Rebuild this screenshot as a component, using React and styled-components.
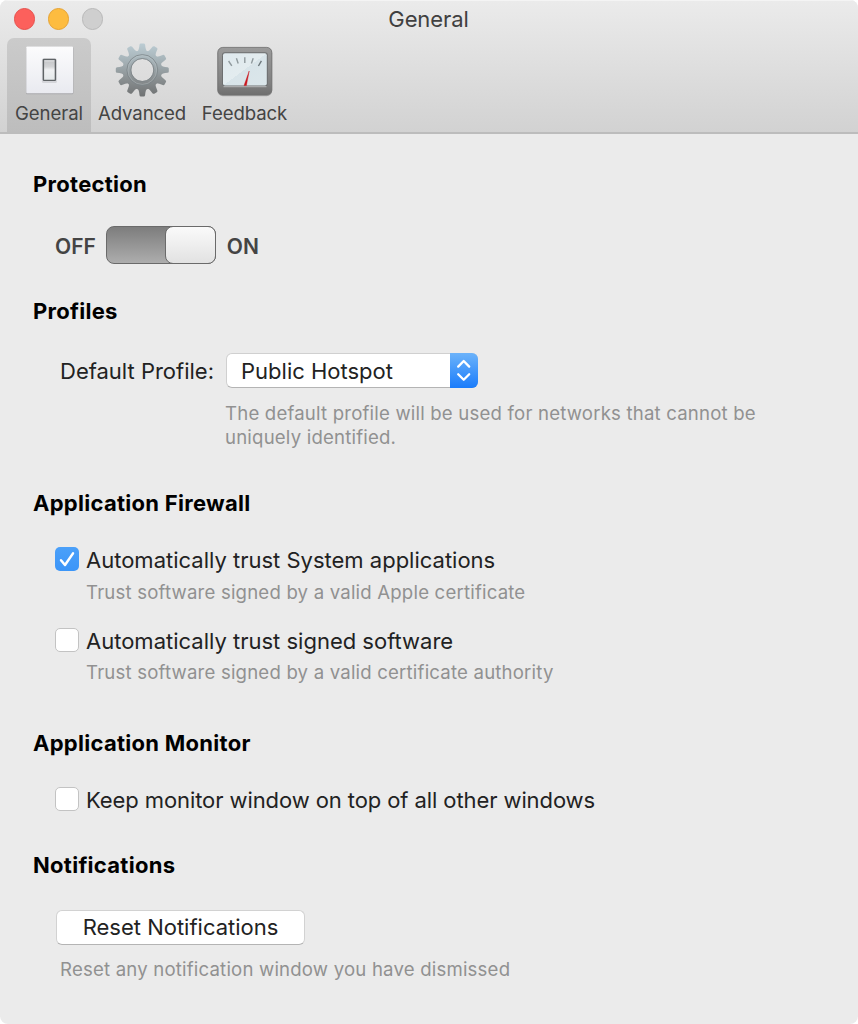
import React, { useState } from 'react'
import styled, { createGlobalStyle } from 'styled-components'

const TEETH = [0, 30, 60, 90, 120, 150, 180, 210, 240, 270, 300, 330]
const TICKS = [
  [12.6, 19, 15.8, 23.8],
  [20.4, 16.2, 22.2, 21.4],
  [28.8, 15.3, 28.8, 21],
  [37.2, 16.2, 35.4, 21.4],
  [45.4, 18.8, 42.4, 24],
]

function SwitchIcon() {
  return (
    <svg width="56" height="56" viewBox="0 0 56 56">
      <defs>
        <linearGradient id="plate" x1="0" y1="0" x2="0" y2="1">
          <stop offset="0" stopColor="#fcfcfd" />
          <stop offset="1" stopColor="#e9eaf0" />
        </linearGradient>
        <linearGradient id="rocker" x1="0" y1="0" x2="0" y2="1">
          <stop offset="0" stopColor="#c2c3c6" />
          <stop offset="0.35" stopColor="#d3d4d6" />
          <stop offset="0.5" stopColor="#f0f1f3" />
          <stop offset="1" stopColor="#e4e8ea" />
        </linearGradient>
      </defs>
      <rect x="5" y="4.8" width="47.4" height="47.4" rx="1" fill="#a9a9ac" />
      <rect x="5.3" y="4.4" width="46.7" height="46.8" rx="0.8" fill="url(#plate)" />
      <rect x="20.9" y="16.6" width="15" height="24.4" rx="1.5" fill="#c9cace" opacity="0.7" />
      <rect x="22.4" y="17.4" width="12" height="21" rx="0.6" fill="url(#rocker)" stroke="#5f6366" strokeWidth="1.4" />
      <path d="M23.6 19h9.6" stroke="#dfe0e2" strokeWidth="1" />
    </svg>
  )
}

function GearIcon() {
  return (
    <svg width="56" height="56" viewBox="0 0 56 56">
      <defs>
        <linearGradient id="steel" gradientUnits="userSpaceOnUse" x1="0" y1="-27" x2="0" y2="27">
          <stop offset="0" stopColor="#bccdd4" />
          <stop offset="0.35" stopColor="#a4b0b5" />
          <stop offset="0.65" stopColor="#8b9193" />
          <stop offset="1" stopColor="#6f7172" />
        </linearGradient>
        <mask id="teeth" maskUnits="userSpaceOnUse" x="-28" y="-28" width="56" height="56">
          {TEETH.map((angle) => (
            <path
              key={angle}
              d="M-5 -18 Q-3.2 -20 -2.8 -25.2 Q-2.6 -26.5 -1.4 -26.5 L1.4 -26.5 Q2.6 -26.5 2.8 -25.2 Q3.2 -20 5 -18Z"
              transform={`rotate(${angle})`}
              fill="#fff"
            />
          ))}
          <circle r="19.8" fill="#fff" />
          <circle r="11" fill="#000" />
        </mask>
      </defs>
      <g transform="translate(28.3 28)">
        <rect x="-28" y="-28" width="56" height="56" fill="url(#steel)" mask="url(#teeth)" />
        <circle r="15.4" fill="none" stroke="#7b8488" strokeWidth="0.8" />
        <circle r="14.4" fill="none" stroke="#c2cbce" strokeWidth="0.7" opacity="0.5" />
        <circle r="11.5" fill="none" stroke="#7f8689" strokeWidth="0.9" />
      </g>
    </svg>
  )
}

function MeterIcon() {
  return (
    <svg width="57" height="56" viewBox="0 0 57 56">
      <defs>
        <linearGradient id="bezel" x1="0" y1="0" x2="0" y2="1">
          <stop offset="0" stopColor="#9b9b9b" />
          <stop offset="0.75" stopColor="#808080" />
          <stop offset="1" stopColor="#6f6f6f" />
        </linearGradient>
        <linearGradient id="glass" x1="0" y1="0" x2="1" y2="1">
          <stop offset="0" stopColor="#dfe9ee" />
          <stop offset="0.5" stopColor="#e3ecef" />
          <stop offset="0.5" stopColor="#d8e4e9" />
          <stop offset="1" stopColor="#dbe6ea" />
        </linearGradient>
      </defs>
      <rect x="1.4" y="5.8" width="54.8" height="48.4" rx="5.5" fill="#aaa" />
      <rect x="1.8" y="5.4" width="54" height="47.6" rx="5" fill="url(#bezel)" stroke="#6f6f6f" strokeWidth="0.8" />
      <rect x="6" y="10.2" width="45.8" height="34.2" rx="3" fill="#6d6f70" />
      <path d="M7.5 44.7h43" stroke="#bfc1c2" strokeWidth="0.9" />
      <rect x="7" y="11.2" width="43.8" height="32.4" rx="2" fill="url(#glass)" />
      {TICKS.map(([x1, y1, x2, y2], i) => (
        <line
          key={x1}
          x1={x1}
          y1={y1}
          x2={x2}
          y2={y2}
          stroke={i === 4 ? '#6d777b' : '#8f999d'}
          strokeWidth="1.4"
        />
      ))}
      <path d="M33.2 29 L30.4 43.6 H28Z" fill="#c9151d" stroke="#c9151d" strokeWidth="0.4" />
    </svg>
  )
}

function Option({ label, hint, spacing, defaultChecked = false }) {
  const [checked, setChecked] = useState(defaultChecked)
  return (
    <div>
      <CheckRow onClick={() => setChecked(!checked)}>
        <CheckBox $checked={checked}>
          {checked && (
            <svg width="24" height="24" viewBox="0 0 24 24">
              <path d="M6 13.2 L10 18 L18 6.4" fill="none" stroke="#fff" strokeWidth="2.5" strokeLinecap="round" strokeLinejoin="round" />
            </svg>
          )}
        </CheckBox>
        <CheckLabel $spacing={spacing}>{label}</CheckLabel>
      </CheckRow>
      {hint && <Hint $top={8.5} $left={31}>{hint}</Hint>}
    </div>
  )
}

function App() {
  const [on, setOn] = useState(true)

  return (
    <Window>
      <GlobalStyle />
      <Header>
        <TitleBar>
          <Lights>
            <Light $fill="#fc605c" $edge="#e5504c" />
            <Light $fill="#fdbc40" $edge="#e5a233" />
            <Light $fill="#cfcfcf" $edge="#b8b8b8" />
          </Lights>
          <Title>General</Title>
          <Lights />
        </TitleBar>

        <Toolbar>
          <Tool $width={84} $active>
            <SwitchIcon />
            <ToolLabel>General</ToolLabel>
          </Tool>
          <Tool $width={102}>
            <GearIcon />
            <ToolLabel>Advanced</ToolLabel>
          </Tool>
          <Tool $width={103}>
            <MeterIcon />
            <ToolLabel>Feedback</ToolLabel>
          </Tool>
        </Toolbar>
      </Header>

      <Content>
        <Heading>Protection</Heading>
        <SwitchRow>
          <State>OFF</State>
          <Track $on={on} onClick={() => setOn(!on)}>
            <Knob />
          </Track>
          <State>ON</State>
        </SwitchRow>

        <Heading $top={34}>Profiles</Heading>
        <ProfileRow>
          <Label>Default Profile:</Label>
          <Select>
            <Label>Public Hotspot</Label>
            <Arrows>
              <svg width="28" height="35" viewBox="0 0 28 35">
                <path d="M8.2 13.6 L13.7 8 L19.2 13.6 M8.2 21.2 L13.7 26.8 L19.2 21.2" fill="none" stroke="#fff" strokeWidth="2.3" strokeLinecap="round" strokeLinejoin="round" />
              </svg>
            </Arrows>
          </Select>
        </ProfileRow>
        <Hint $top={13} $left={192}>
          The default profile will be used for networks that cannot be<br />
          uniquely identified.
        </Hint>

        <Heading $top={41}>Application Firewall</Heading>
        <Options>
          <Option
            label="Automatically trust System applications"
            hint="Trust software signed by a valid Apple certificate"
            defaultChecked
          />
          <Option
            label="Automatically trust signed software"
            hint="Trust software signed by a valid certificate authority"
          />
        </Options>

        <Heading $top={45.5}>Application Monitor</Heading>
        <Options>
          <Option label="Keep monitor window on top of all other windows" spacing={-0.09} />
        </Options>

        <Heading $top={41}>Notifications</Heading>
        <Button><Label>Reset Notifications</Label></Button>
        <Hint $top={12} $left={27}>Reset any notification window you have dismissed</Hint>
      </Content>
    </Window>
  )
}

export default App

const GlobalStyle = createGlobalStyle`
  body {
    margin: 0;
    background: #fff;
    font-family: Inter, "Liberation Sans", sans-serif;
  }

  * {
    box-sizing: border-box;
  }

  svg {
    display: block;
  }
`

const Window = styled.div`
  width: 858px;
  height: 1024px;
  overflow: hidden;
  border-radius: 8px;
  background: #ebebeb;
`

const Header = styled.header`
  height: 134px;
  border-bottom: 2px solid #bcbcbc;
  background: linear-gradient(#ebebeb, #d2d2d2);
  box-shadow: inset 0 1px 0 #f4f4f4;
`

const TitleBar = styled.div`
  display: flex;
  align-items: center;
  justify-content: space-between;
  height: 38px;
  padding: 0 14.5px 0 13.5px;
`

const Lights = styled.div`
  display: flex;
  gap: 13px;
  width: 100px;
`

const Light = styled.span`
  flex: none;
  width: 21.3px;
  height: 21.3px;
  border: 1px solid ${(props) => props.$edge};
  border-radius: 50%;
  background: ${(props) => props.$fill};
`

const Title = styled.h1`
  margin: 0;
  font-size: 22px;
  font-weight: 400;
  letter-spacing: -0.1px;
  color: #404040;
`

const Toolbar = styled.nav`
  display: flex;
  padding-left: 7px;
`

const Tool = styled.div`
  display: flex;
  flex-direction: column;
  align-items: center;
  width: ${(props) => props.$width}px;
  height: 94px;
  padding-top: 4px;
  border-radius: 7px 7px 0 0;
  background: ${(props) => (props.$active ? 'linear-gradient(#cbcbcb, #bdbdbd)' : 'none')};
`

const ToolLabel = styled.span`
  margin-top: 3px;
  font-size: 18.6px;
  line-height: 24px;
  letter-spacing: -0.1px;
  white-space: nowrap;
  color: #444;
`

const Content = styled.main`
  padding: 37px 33px 0;
`

const Heading = styled.h2`
  margin: ${(props) => props.$top || 0}px 0 0;
  font-size: 22px;
  font-weight: 700;
  line-height: 26px;
  letter-spacing: 0.28px;
  color: #000;
`

const Label = styled.span`
  font-size: 22px;
  line-height: 26px;
  white-space: nowrap;
  color: #222;
`

const CheckLabel = styled(Label)`
  padding-top: 2px;
  letter-spacing: ${(props) => props.$spacing || 0}px;
`

const Hint = styled.p`
  margin: ${(props) => props.$top}px 0 0 ${(props) => props.$left}px;
  font-size: 18.6px;
  line-height: 24px;
  letter-spacing: 0.19px;
  white-space: nowrap;
  color: #919191;
`

const SwitchRow = styled.div`
  display: flex;
  align-items: center;
  gap: 10.5px;
  margin: 29px 0 0 22px;
`

const State = styled.span`
  padding-top: 3px;
  font-size: 21px;
  font-weight: 600;
  line-height: 26px;
  color: #444;
`

const Track = styled.div`
  display: flex;
  justify-content: ${(props) => (props.$on ? 'flex-end' : 'flex-start')};
  width: 110px;
  height: 38px;
  border: 1.5px solid #6a6a6a;
  border-radius: 8px;
  background: linear-gradient(#7d7d7d, #adadad);
`

const Knob = styled.div`
  width: 51px;
  height: 38px;
  margin: -1px;
  border: 1.5px solid #6a6a6a;
  border-radius: 8px;
  background: linear-gradient(#fafafa, #e2e2e2);
`

const ProfileRow = styled.div`
  display: flex;
  align-items: center;
  gap: 12px;
  margin: 29px 0 0 27px;
`

const Select = styled.div`
  display: flex;
  align-items: center;
  justify-content: space-between;
  width: 252px;
  height: 35px;
  padding-left: 14px;
  border: 1px solid #d0d0d0;
  border-bottom-color: #b4b4b4;
  border-radius: 6px;
  background: #fff;
`

const Arrows = styled.div`
  width: 28px;
  height: 35px;
  margin-right: -1px;
  border-radius: 0 6px 6px 0;
  background: linear-gradient(#6cb3fa, #1a7cfb);
`

const Options = styled.div`
  display: flex;
  flex-direction: column;
  gap: 24px;
  margin: 31px 0 0 22px;
`

const CheckRow = styled.div`
  display: flex;
  align-items: center;
  gap: 7px;
  height: 24px;
`

const CheckBox = styled.span`
  flex: none;
  width: 24px;
  height: 24px;
  border: ${(props) => (props.$checked ? 'none' : '1px solid #c3c3c3')};
  border-radius: 5px;
  background: ${(props) => (props.$checked ? 'linear-gradient(#4ba0f9, #3b95f8)' : '#fff')};
`

const Button = styled.button`
  display: flex;
  align-items: center;
  justify-content: center;
  width: 249px;
  height: 35px;
  margin: 32px 0 0 23px;
  padding: 0;
  border: 1px solid #d2d2d2;
  border-bottom-color: #b4b4b4;
  border-radius: 6px;
  background: #fff;
  font-family: inherit;
`
